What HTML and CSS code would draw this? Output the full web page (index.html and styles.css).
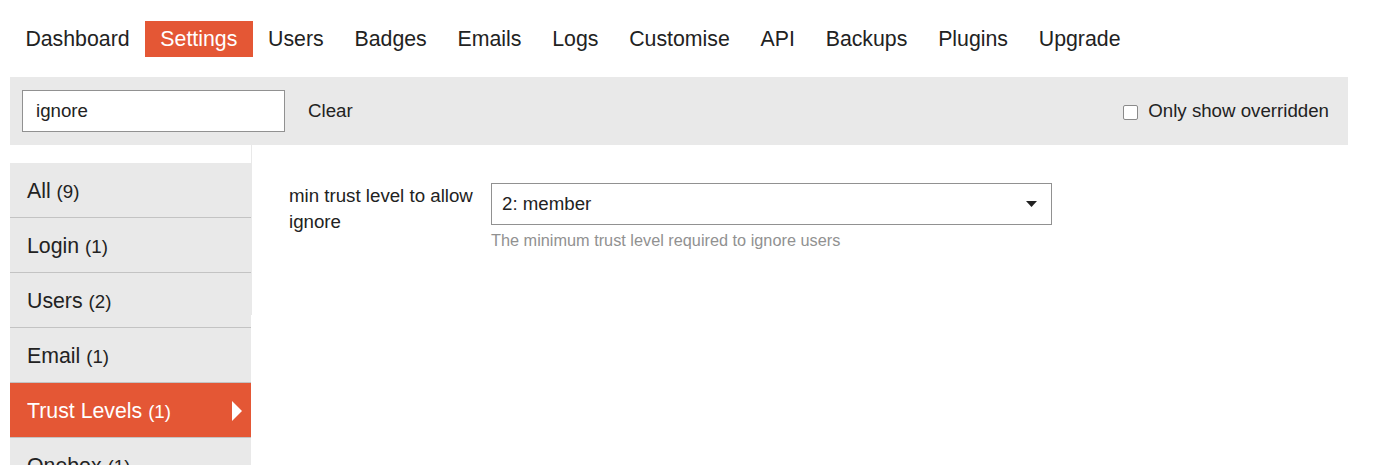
FILE: index.html
```html
<!DOCTYPE html>
<html>
<head>
<meta charset="utf-8">
<link rel="stylesheet" href="styles.css">
</head>
<body>
<div class="page">
  <nav class="tabs">
    <a class="tab">Dashboard</a>
    <a class="tab active">Settings</a>
    <a class="tab">Users</a>
    <a class="tab">Badges</a>
    <a class="tab">Emails</a>
    <a class="tab">Logs</a>
    <a class="tab">Customise</a>
    <a class="tab">API</a>
    <a class="tab">Backups</a>
    <a class="tab">Plugins</a>
    <a class="tab">Upgrade</a>
  </nav>
  <div class="filter-bar">
    <div class="search-box">ignore</div>
    <span class="clear">Clear</span>
    <label class="only-overridden"><span class="checkbox"></span>Only show overridden</label>
  </div>
  <div class="main">
    <ul class="sidebar">
      <li class="cat">All <span class="count">(9)</span></li>
      <li class="cat">Login <span class="count">(1)</span></li>
      <li class="cat">Users <span class="count">(2)</span></li>
      <li class="cat">Email <span class="count">(1)</span></li>
      <li class="cat active">Trust Levels <span class="count">(1)</span>
        <svg class="caret" width="10" height="20" viewBox="0 0 10 20"><polygon points="0,0 10,10 0,20" fill="#fff"/></svg>
      </li>
      <li class="cat">Onebox <span class="count">(1)</span></li>
    </ul>
    <div class="content">
      <div class="setting">
        <div class="setting-label">min trust level to allow ignore</div>
        <div class="setting-value">
          <div class="select">
            <span>2: member</span>
            <svg class="select-caret" width="11" height="6" viewBox="0 0 11 6"><polygon points="0,0 11,0 5.5,6" fill="#222"/></svg>
          </div>
          <div class="desc">The minimum trust level required to ignore users</div>
        </div>
      </div>
    </div>
  </div>
</div>
</body>
</html>
```
FILE: styles.css
```css
html, body {
  margin: 0;
  padding: 0;
  background: #fff;
}
body {
  font-family: "Liberation Sans", Arial, sans-serif;
  color: #222;
  font-size: 18.7px;
  overflow: hidden;
}
.page {
  padding: 0 10px;
}
.tabs {
  display: flex;
  margin-top: 21px;
  height: 36px;
}
.tab {
  display: block;
  padding: 1px 15.4px 0;
  font-size: 21.3px;
  line-height: 35px;
  color: #222;
}
.tab.active {
  background: #e45735;
  color: #fff;
}
.filter-bar {
  margin-top: 20px;
  height: 68px;
  width: 1338px;
  box-sizing: border-box;
  background: #e9e9e9;
  display: flex;
  align-items: center;
  padding: 0 19px 0 12px;
}
.search-box {
  width: 263px;
  height: 42px;
  box-sizing: border-box;
  border: 1px solid #919191;
  background: #fff;
  padding: 0 13px;
  line-height: 40px;
}
.clear {
  margin-left: 23px;
}
.only-overridden {
  margin-left: auto;
  display: flex;
  align-items: center;
}
.checkbox {
  width: 13px;
  height: 13px;
  border: 1px solid #8a8a8a;
  border-radius: 2px;
  background: #fff;
  margin-right: 10px;
  margin-top: 2px;
}
.main {
  display: flex;
  align-items: flex-start;
}
.sidebar {
  list-style: none;
  margin: 18px 0 0 0;
  padding: 0;
  width: 241px;
  flex: none;
}
.cat {
  display: flex;
  align-items: center;
  box-sizing: border-box;
  padding: 2px 9px 0 17px;
  height: 55px;
  background: #e9e9e9;
  border-bottom: 1px solid #c3c3c3;
  font-size: 21.3px;
  white-space: pre;
}
.cat .count {
  font-size: 18.7px;
  margin-top: 2px;
}
.cat.active {
  background: #e45735;
  color: #fff;
  height: 56px;
  margin-top: -1px;
  border-top: 1px solid #c3c3c3;
}
.caret {
  margin-left: auto;
}
.content {
  border-left: 1px solid #e9e9e9;
  height: 170px;
  padding: 38px 0 0 37px;
  box-sizing: border-box;
  flex: 1;
}
.setting {
  display: flex;
  align-items: flex-start;
}
.setting-label {
  width: 190px;
  margin-right: 12px;
  line-height: 26px;
}
.select {
  width: 561px;
  height: 42px;
  box-sizing: border-box;
  border: 1px solid #919191;
  display: flex;
  align-items: center;
  padding: 0 14px 0 10px;
}
.select-caret {
  margin-left: auto;
}
.desc {
  color: #919191;
  font-size: 16.3px;
  margin-top: 6px;
}
```
